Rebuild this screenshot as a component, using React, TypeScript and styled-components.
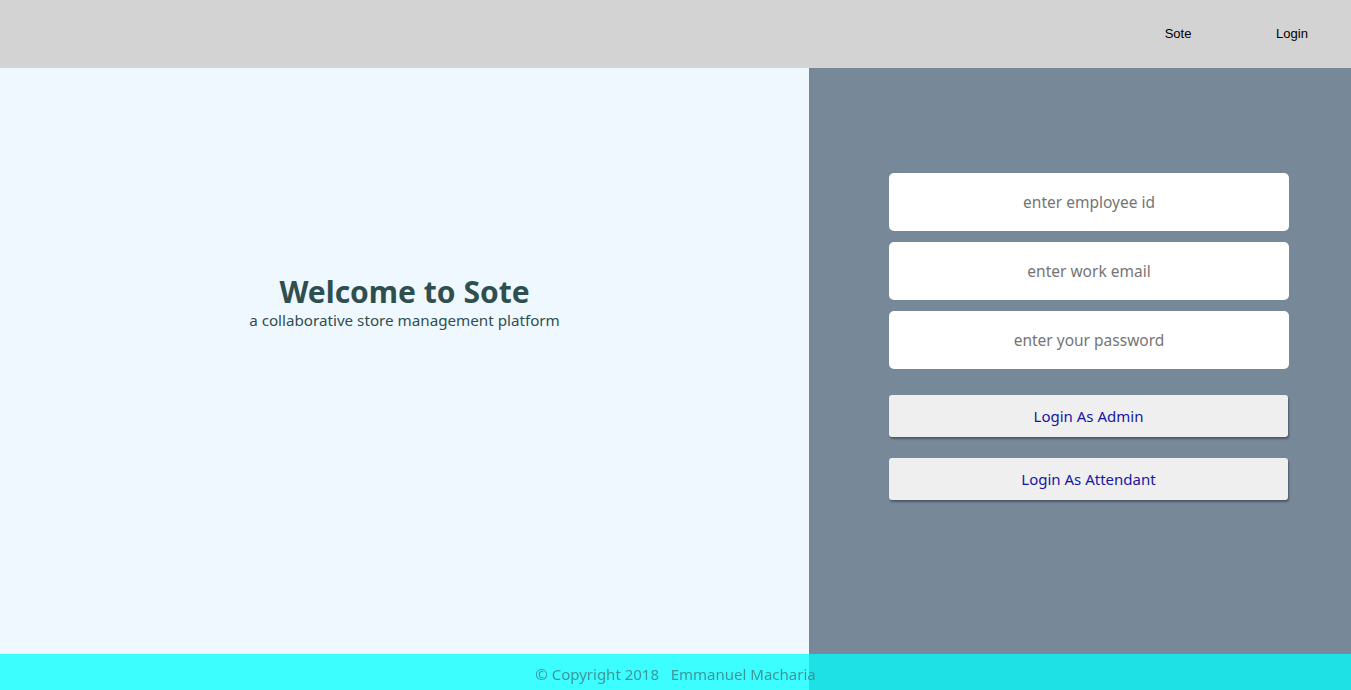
import React from "react";
import styled, { createGlobalStyle } from "styled-components";

const Global = createGlobalStyle`
  html, body { margin: 0; padding: 0; height: 100%; }
  body { font-family: "Noto Sans", "DejaVu Sans", sans-serif; }
  #root { height: 100%; }
`;

const Page = styled.div`
  display: flex;
  flex-direction: column;
  height: 100vh;
`;

const Header = styled.header`
  height: 68px;
  flex: 0 0 68px;
  background: #d3d3d3;
  display: flex;
  justify-content: flex-end;
  align-items: center;
  padding-right: 2px;
`;

const NavLink = styled.a`
  font-family: "Liberation Sans", Arial, sans-serif;
  font-size: 13px;
  color: #000;
  text-decoration: none;
  width: 114px;
  text-align: center;
  margin-top: -2px;
`;

const Main = styled.main`
  flex: 1;
  display: flex;
`;

const Intro = styled.section`
  flex: 0 0 809px;
  background: #f0f8ff;
  display: flex;
  flex-direction: column;
  align-items: center;
  padding-top: 206px;
  box-sizing: border-box;
`;

const Title = styled.h1`
  margin: 0;
  font-family: "Noto Sans", sans-serif;
  font-weight: 700;
  font-size: 30px;
  line-height: 36px;
  color: #2f4f4f;
`;

const Subtitle = styled.p`
  margin: 0;
  font-family: "Noto Sans", sans-serif;
  font-size: 15.2px;
  line-height: 20px;
  color: #2f4f4f;
`;

const FormPanel = styled.section`
  flex: 1;
  background: #778899;
  padding: 105px 0 0 80px;
  box-sizing: border-box;
  display: flex;
  flex-direction: column;
`;

const Field = styled.input`
  width: 400px;
  height: 58px;
  box-sizing: border-box;
  border: none;
  border-radius: 5px;
  background: #fff;
  text-align: center;
  font-family: "Noto Sans", sans-serif;
  font-size: 15.5px;
  margin-bottom: 11px;
  outline: none;
  &::placeholder { color: #757575; }
`;

const Button = styled.button<{ $top: number }>`
  width: 399px;
  height: 42px;
  margin-top: ${(p) => p.$top}px;
  border: none;
  border-radius: 3px;
  background: #efefef;
  color: #1616a3;
  font-family: "Noto Sans", sans-serif;
  font-size: 15px;
  box-shadow: 1px 2px 2px rgba(0, 0, 0, 0.35);
  cursor: pointer;
`;

const Footer = styled.footer`
  position: fixed;
  left: 0;
  right: 0;
  bottom: 0;
  height: 36px;
  background: rgba(0, 255, 255, 0.75);
  display: flex;
  align-items: center;
  justify-content: center;
  font-family: "Noto Sans", sans-serif;
  font-size: 15px;
  color: #3c9799;
  padding-top: 3px;
  box-sizing: border-box;
  white-space: pre;
`;

export default function App() {
  return (
    <Page>
      <Global />
      <Header>
        <NavLink href="#">Sote</NavLink>
        <NavLink href="#">Login</NavLink>
      </Header>
      <Main>
        <Intro>
          <Title>Welcome to Sote</Title>
          <Subtitle>a collaborative store management platform</Subtitle>
        </Intro>
        <FormPanel>
          <Field placeholder="enter employee id" />
          <Field placeholder="enter work email" />
          <Field type="password" placeholder="enter your password" />
          <Button $top={15}>Login As Admin</Button>
          <Button $top={21}>Login As Attendant</Button>
        </FormPanel>
      </Main>
      <Footer>{"© Copyright 2018   Emmanuel Macharia"}</Footer>
    </Page>
  );
}
